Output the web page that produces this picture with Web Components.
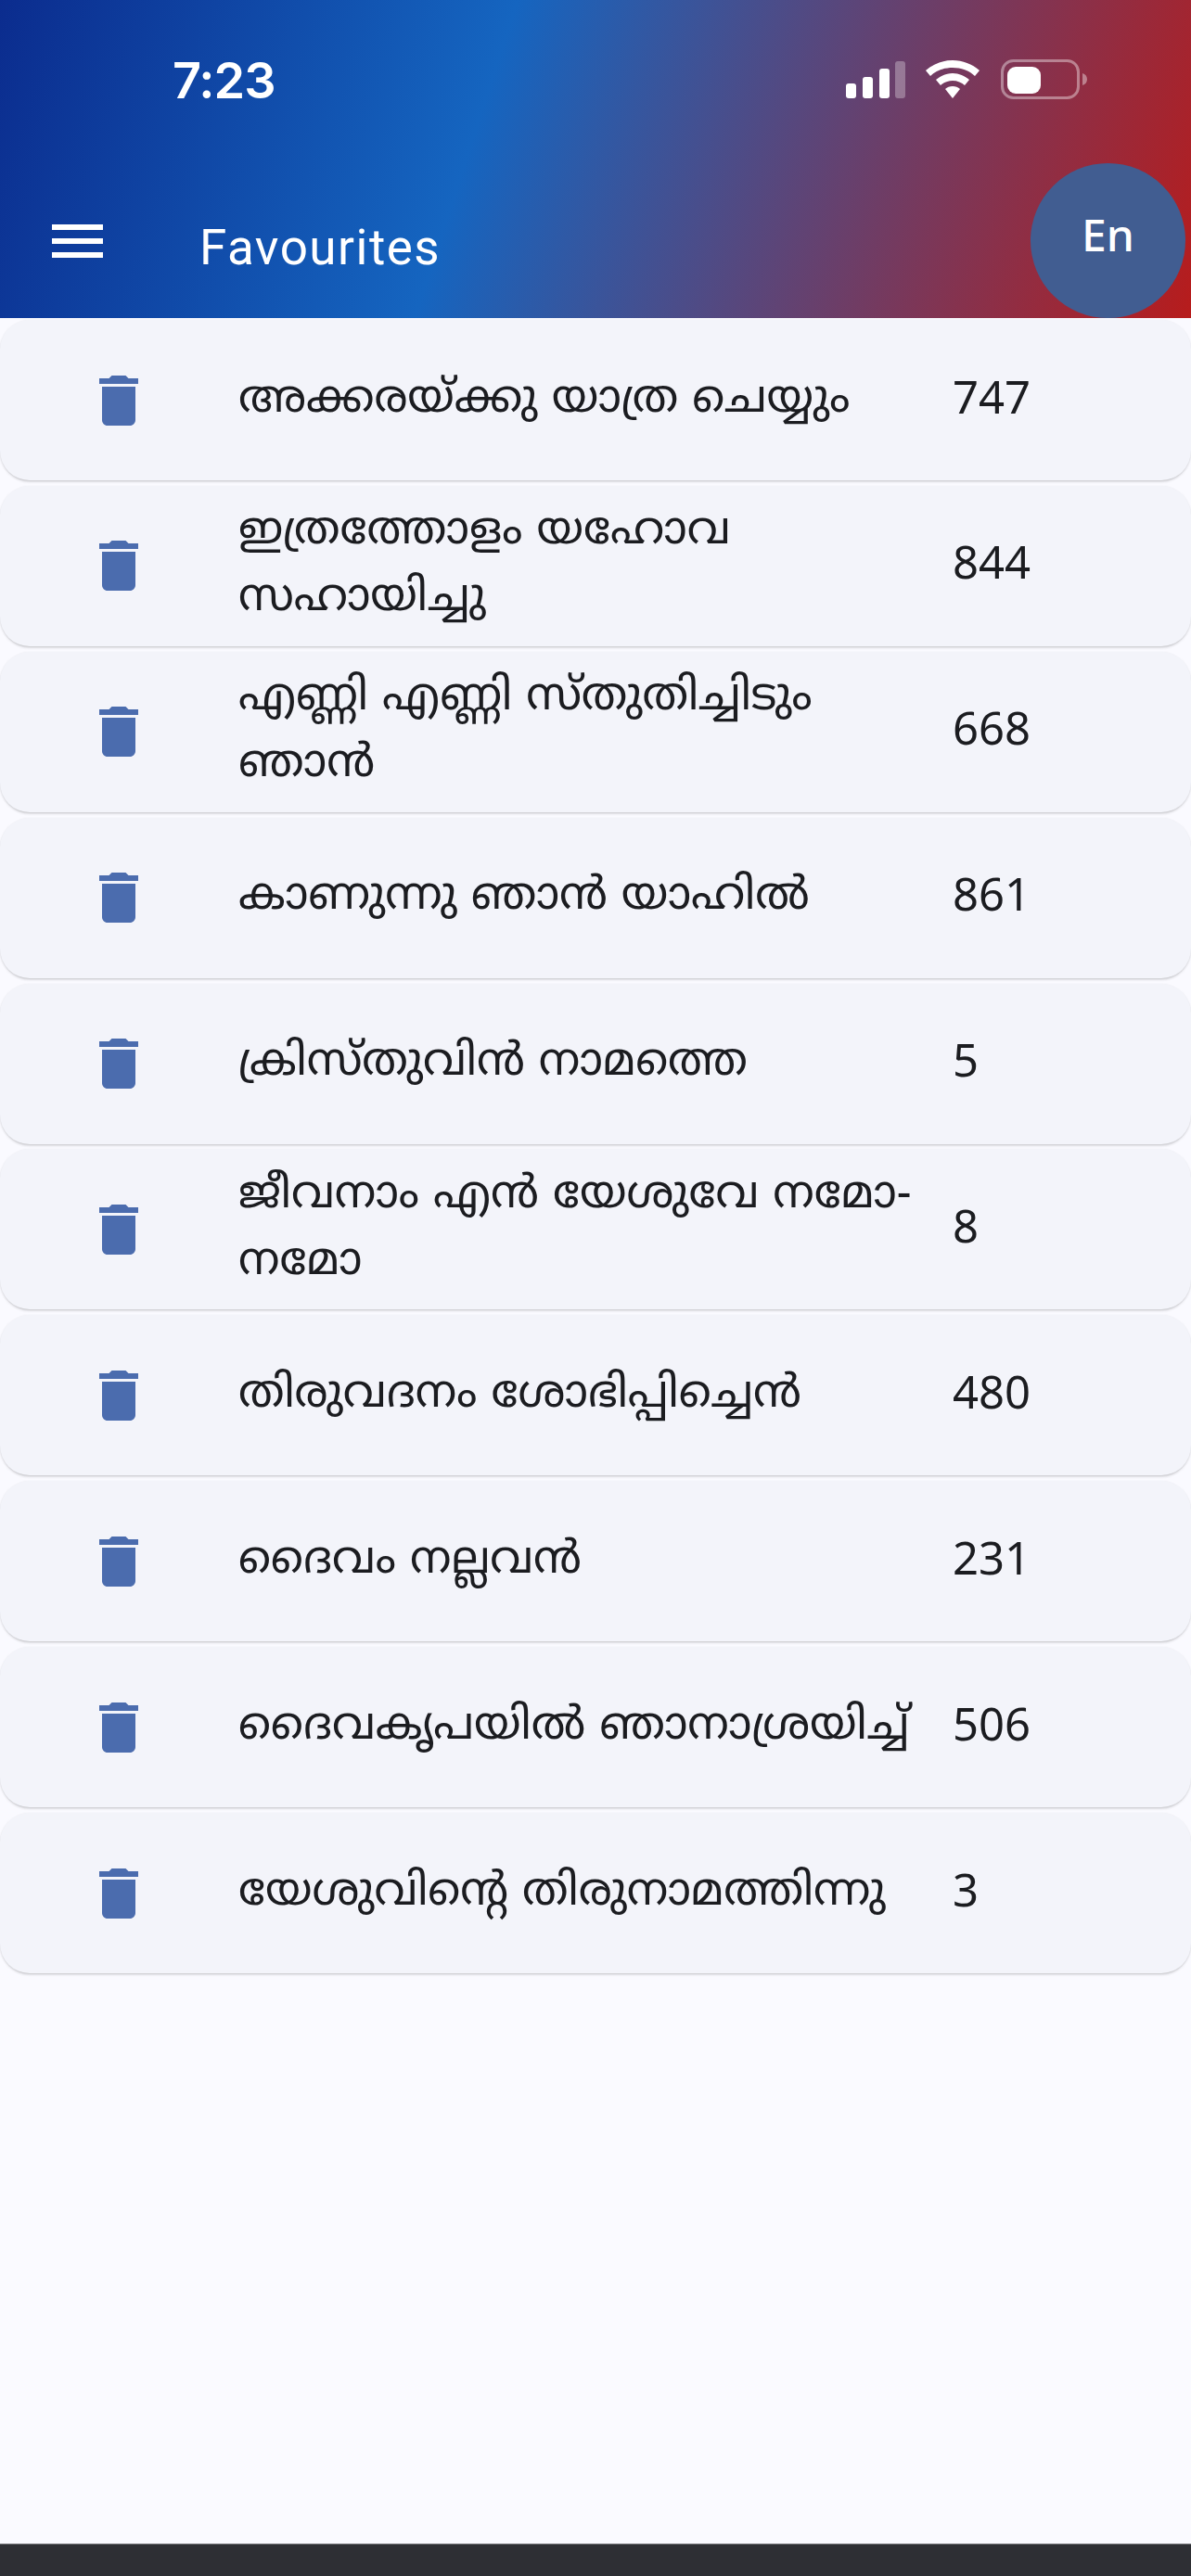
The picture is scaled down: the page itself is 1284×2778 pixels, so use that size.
<!DOCTYPE html>
<html lang="ml">
<head>
<meta charset="utf-8">
<title>Favourites</title>
<style>
    html, body { margin: 0; padding: 0; height: 100%; background: #fafaff; }
</style>
</head>
<body>
<fav-page>
    <app-header slot="header" title="Favourites" lang-label="En"></app-header>
    <fav-row number="747">അക്കരയ്ക്കു യാത്ര ചെയ്യും</fav-row>
    <fav-row number="844">ഇത്രത്തോളം യഹോവ സഹായിച്ചു</fav-row>
    <fav-row number="668">എണ്ണി എണ്ണി സ്തുതിച്ചിടും ഞാൻ</fav-row>
    <fav-row number="861">കാണുന്നു ഞാൻ യാഹിൽ</fav-row>
    <fav-row number="5">ക്രിസ്തുവിൻ നാമത്തെ</fav-row>
    <fav-row number="8">ജീവനാം എൻ യേശുവേ നമോ-നമോ</fav-row>
    <fav-row number="480">തിരുവദനം ശോഭിപ്പിച്ചെൻ</fav-row>
    <fav-row number="231">ദൈവം നല്ലവൻ</fav-row>
    <fav-row number="506">ദൈവകൃപയിൽ ഞാനാശ്രയിച്ച്</fav-row>
    <fav-row number="3">യേശുവിന്റെ തിരുനാമത്തിന്നു</fav-row>
</fav-page>
<script>
class FavPage extends HTMLElement {
    constructor() {
        super();
        const shadow = this.attachShadow({ mode: 'open' });
        shadow.innerHTML = `
            <style>
                :host {
                    display: flex;
                    flex-direction: column;
                    height: 2778px;
                    background: #fafaff;
                }
                .list {
                    flex: 1;
                    display: flex;
                    flex-direction: column;
                    gap: 5.9px;
                    padding-top: 2px;
                }
                .nav {
                    height: 34px;
                    background: #2e2f34;
                    border-top: 1px solid #77787c;
                }
            </style>
            <slot name="header"></slot>
            <div class="list"><slot></slot></div>
            <div class="nav"></div>
        `;
    }
}

class AppHeader extends HTMLElement {
    constructor() {
        super();
        const shadow = this.attachShadow({ mode: 'open' });
        shadow.innerHTML = `
            <style>
                :host {
                    display: block;
                    position: relative;
                    height: 343px;
                    background: linear-gradient(108deg, #0b2c8e 0%, #1565c0 40%, #b71c1c 100%);
                    color: #fff;
                    font-family: "Noto Sans", sans-serif;
                }
                .status {
                    display: flex;
                    align-items: center;
                    height: 172px;
                    padding: 0 112px 0 186px;
                    box-sizing: border-box;
                }
                .time {
                    font: 600 54px/1 Inter, sans-serif;
                    flex: 1;
                    letter-spacing: -1px;
                    margin-top: 2px;
                }
                .status svg { display: block; }
                .bar {
                    display: flex;
                    align-items: center;
                    height: 171px;
                    padding-left: 56px;
                }
                .menu { display: block; margin-right: 104px; margin-top: 4px; }
                .title {
                    font: 400 53px/1 Roboto, sans-serif;
                    letter-spacing: 1.5px;
                    margin-top: 19px;
                }
                .lang {
                    position: absolute;
                    left: 1111px;
                    top: 176px;
                    width: 167px;
                    height: 167px;
                    border-radius: 50%;
                    background: #415d91;
                    display: flex;
                    align-items: center;
                    justify-content: center;
                    font-size: 48px;
                    font-weight: 500;
                    padding-bottom: 14px;
                    box-sizing: border-box;
                }
            </style>
            <div class="status">
                <span class="time">7:23</span>
                <svg width="261" height="44" viewBox="0 0 261 44" fill="#fff">
                    <rect x="1" y="26" width="11" height="16" rx="3"/>
                    <rect x="19" y="19" width="11" height="23" rx="3"/>
                    <rect x="37" y="10" width="11" height="32" rx="3"/>
                    <rect x="54" y="2" width="11" height="40" rx="3" opacity=".3"/>
                    <path d="M116 1c-11 0-21 4-29 11l5 6c6-6 15-9 24-9s18 3 24 9l5-6C137 5 127 1 116 1z"/>
                    <path d="M116 15c-7 0-13 3-18 7l5 6c3-3 8-5 13-5s10 2 13 5l5-6c-5-4-11-7-18-7z"/>
                    <path d="M116 29c-3 0-6 1-8 3l8 10 8-10c-2-2-5-3-8-3z"/>
                    <rect x="169.5" y="1.5" width="82" height="40" rx="12" fill="none" stroke="#fff" stroke-opacity=".4" stroke-width="3"/>
                    <rect x="175" y="8" width="36" height="29" rx="9"/>
                    <path d="M256 15c3 1 5 3 5 6.5s-2 5.500-5 6.500z" opacity=".4"/>
                </svg>
            </div>
            <div class="bar">
                <svg class="menu" width="55" height="36" viewBox="0 0 55 36" fill="#fff">
                    <rect y="0" width="55" height="6"/>
                    <rect y="15" width="55" height="6"/>
                    <rect y="30" width="55" height="6"/>
                </svg>
                <span class="title"></span>
            </div>
            <div class="lang"></div>
        `;
    }

    connectedCallback() {
        this.shadowRoot.querySelector('.title').textContent = this.getAttribute('title');
        this.shadowRoot.querySelector('.lang').textContent = this.getAttribute('lang-label');
    }
}

class FavRow extends HTMLElement {
    constructor() {
        super();
        const shadow = this.attachShadow({ mode: 'open' });
        shadow.innerHTML = `
            <style>
                :host {
                    display: grid;
                    grid-template-columns: 164px 93px 770px 1fr;
                    align-items: center;
                    height: 173px;
                    background: #f3f4fa;
                    border-radius: 32px;
                    box-shadow: 0 2px 3px -1px rgba(0, 0, 0, 0.24), 0 0 2px rgba(0, 0, 0, 0.05);
                    color: #1b1c20;
                    font-family: "Noto Sans Malayalam", "Noto Sans", sans-serif;
                    font-size: 48.8px;
                }
                svg { display: block; grid-column: 1; justify-self: end; }
                .title { grid-column: 3; padding-right: 36px; line-height: 72px; margin-top: 2px; }
                .number { grid-column: 4; font-family: "Noto Sans", sans-serif; font-size: 49px; margin-bottom: 10px; }
            </style>
            <svg width="72" height="72" viewBox="0 0 24 24" fill="#4b6cae">
                <path d="M6 19c0 1.1.9 2 2 2h8c1.1 0 2-.9 2-2V7H6v12zM19 4h-3.5l-1-1h-5l-1 1H5v2h14V4z"/>
            </svg>
            <div class="title"><slot></slot></div>
            <div class="number"></div>
        `;
    }

    connectedCallback() {
        this.shadowRoot.querySelector('.number').textContent = this.getAttribute('number');
    }
}

customElements.define('fav-page', FavPage);
customElements.define('app-header', AppHeader);
customElements.define('fav-row', FavRow);
</script>
</body>
</html>
